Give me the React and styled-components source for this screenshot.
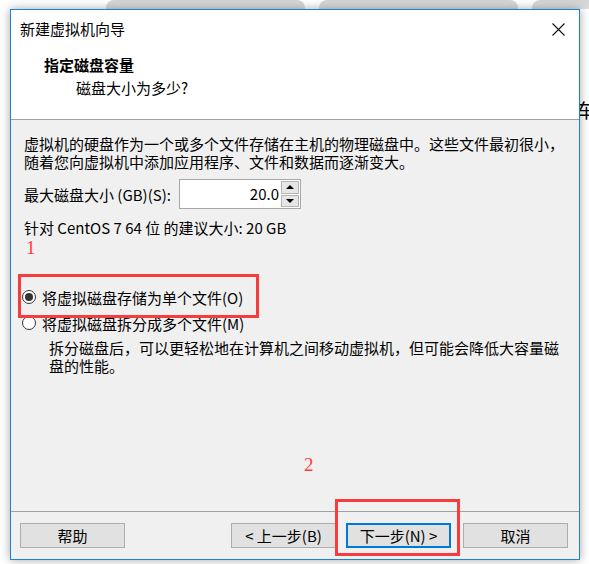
import React from "react";
import styled, { createGlobalStyle } from "styled-components";

const GlobalStyle = createGlobalStyle`
    html, body {
        margin: 0;
        padding: 0;
        background: #ffffff;
    }
    body {
        font-family: "Segoe UI", "Noto Sans CJK SC", sans-serif;
        font-size: 15px;
        color: #000;
    }
`;

function CloseIcon() {
    return (
        <svg width="13" height="13" viewBox="0 0 13 13">
            <path d="M0.5 0.5 L12.5 12.5 M12.5 0.5 L0.5 12.5" stroke="#111" strokeWidth="1.1" fill="none" />
        </svg>
    );
}

function App() {
    return (
        <Page>
            <GlobalStyle />
            <TabStrip>
                <Tab />
                <Tab />
                <Tab />
            </TabStrip>
            <Row>
                <Window>
                    <TitleBar>
                        <Title>新建虚拟机向导</Title>
                        <CloseButton>
                            <CloseIcon />
                        </CloseButton>
                    </TitleBar>
                    <Header>
                        <Heading>指定磁盘容量</Heading>
                        <SubHeading>磁盘大小为多少?</SubHeading>
                    </Header>
                    <Body>
                        <Paragraph>
                            虚拟机的硬盘作为一个或多个文件存储在主机的物理磁盘中。这些文件最初很小，
                            <br />
                            随着您向虚拟机中添加应用程序、文件和数据而逐渐变大。
                        </Paragraph>
                        <SizeRow>
                            <Label>最大磁盘大小 (GB)(S):</Label>
                            <SpinBox>
                                <SpinValue>20.0</SpinValue>
                                <SpinButtons>
                                    <SpinButton>
                                        <Arrow up />
                                    </SpinButton>
                                    <SpinButton>
                                        <Arrow />
                                    </SpinButton>
                                </SpinButtons>
                            </SpinBox>
                        </SizeRow>
                        <Hint>针对 CentOS 7 64 位 的建议大小: 20 GB</Hint>
                        <RadioRow first>
                            <Radio checked />
                            <span>将虚拟磁盘存储为单个文件(O)</span>
                        </RadioRow>
                        <RadioRow>
                            <Radio />
                            <span>将虚拟磁盘拆分成多个文件(M)</span>
                        </RadioRow>
                        <Description>
                            拆分磁盘后，可以更轻松地在计算机之间移动虚拟机，但可能会降低大容量磁
                            <br />
                            盘的性能。
                        </Description>
                    </Body>
                    <Footer>
                        <Button>帮助</Button>
                        <Spacer />
                        <Button>&lt; 上一步(B)</Button>
                        <Button primary>下一步(N) &gt;</Button>
                        <Button last>取消</Button>
                    </Footer>

                    {/* red annotations drawn over the dialog */}
                    <Mark style={{ left: 15, top: 228 }}>1</Mark>
                    <Highlight style={{ left: 7, top: 264, width: 241, height: 44 }} />
                    <Mark style={{ left: 293, top: 445 }}>2</Mark>
                    <Highlight style={{ left: 324, top: 489, width: 125, height: 57 }} />
                </Window>
                <SideStrip>
                    <SideGlyph>车</SideGlyph>
                </SideStrip>
            </Row>
        </Page>
    );
}

const Page = styled.div`
    width: 589px;
    height: 564px;
    overflow: hidden;
    background: #ffffff;
`;

const TabStrip = styled.div`
    display: flex;
    gap: 14px;
    height: 9px;
    padding-left: 106px;
    overflow: hidden;
`;

const Tab = styled.div`
    flex: 0 0 199px;
    height: 14px;
    border-radius: 8px 8px 0 0;
    background: linear-gradient(#d4d4d4, #e2e2e2);
`;

const Row = styled.div`
    display: flex;
`;

const Window = styled.div`
    position: relative;
    margin-left: 10px;
    width: 570px;
    height: 551px;
    box-sizing: border-box;
    border: 1px solid #1883d7;
    background: #f0f0f0;
    box-shadow: 0 0 9px rgba(0, 0, 0, 0.35);
    display: flex;
    flex-direction: column;
    flex-shrink: 0;
`;

const TitleBar = styled.div`
    height: 37px;
    background: #fff;
    display: flex;
    align-items: center;
    justify-content: space-between;
    padding: 0 14px 0 9px;
`;

const Title = styled.div`
    font-size: 15px;
    line-height: 20px;
`;

const CloseButton = styled.div`
    display: flex;
    align-items: center;
    padding-top: 1px;
`;

const Header = styled.div`
    height: 73px;
    box-sizing: border-box;
    background: #fff;
    border-bottom: 1px solid #a0a0a0;
    padding: 8px 0 0 33px;
`;

const Heading = styled.div`
    font-weight: bold;
    font-size: 15px;
    line-height: 20px;
`;

const SubHeading = styled.div`
    margin-top: 3px;
    padding-left: 32px;
    font-size: 15px;
    line-height: 20px;
`;

const Body = styled.div`
    flex: 1;
    padding: 15px 13px 0;
`;

const Paragraph = styled.div`
    line-height: 18px;
    white-space: nowrap;
`;

const SizeRow = styled.div`
    display: flex;
    align-items: center;
    gap: 5px;
    margin-top: 8px;
    height: 30px;
`;

const Label = styled.div`
    line-height: 20px;
    padding-top: 2px;
`;

const SpinBox = styled.div`
    display: flex;
    width: 122px;
    height: 30px;
    box-sizing: border-box;
    border: 1px solid #a8a8a8;
    background: #fff;
    margin-left: auto;
    margin-right: 265px;
`;

const SpinValue = styled.div`
    flex: 1;
    text-align: right;
    padding-right: 2px;
    line-height: 28px;
`;

const SpinButtons = styled.div`
    display: flex;
    flex-direction: column;
    width: 18px;
    padding: 1px 1px 1px 0;
    gap: 1px;
`;

const SpinButton = styled.div`
    flex: 1;
    background: #e6e6e6;
    border: 1px solid #b4b4b4;
    display: flex;
    align-items: center;
    justify-content: center;
`;

const Arrow = styled.div`
    width: 0;
    height: 0;
    border-left: 4px solid transparent;
    border-right: 4px solid transparent;
    ${(props) => (props.up ? "border-bottom: 4px solid #000;" : "border-top: 4px solid #000;")}
`;

const Hint = styled.div`
    margin-top: 10px;
    line-height: 18px;
`;

const RadioRow = styled.div`
    display: flex;
    align-items: center;
    gap: 6px;
    height: 20px;
    margin-top: ${(props) => (props.first ? "50px" : "6px")};
    margin-left: -2px;
`;

const Radio = styled.div`
    width: 14px;
    height: 14px;
    box-sizing: border-box;
    border-radius: 50%;
    border: 1px solid #333;
    background: #fff;
    display: flex;
    align-items: center;
    justify-content: center;

    &::after {
        content: "";
        width: 8px;
        height: 8px;
        border-radius: 50%;
        background: ${(props) => (props.checked ? "#333" : "transparent")};
    }
`;

const Description = styled.div`
    margin-top: 6px;
    padding-left: 25px;
    line-height: 18px;
    white-space: nowrap;
`;

const Footer = styled.div`
    height: 48px;
    box-sizing: border-box;
    border-top: 1px solid #a0a0a0;
    display: flex;
    align-items: flex-start;
    padding: 11px 0 0 9px;
`;

const Spacer = styled.div`
    flex: 1;
`;

const Button = styled.div`
    width: 105px;
    height: 25px;
    box-sizing: border-box;
    background: #e1e1e1;
    border: ${(props) => (props.primary ? "2px solid #0078d7" : "1px solid #adadad")};
    display: flex;
    align-items: center;
    justify-content: center;
    font-size: 15px;
    margin-right: ${(props) => (props.last ? "11px" : props.primary ? "12px" : "10px")};
`;

const Mark = styled.div`
    position: absolute;
    color: #ff3b3b;
    font-family: "Liberation Serif", serif;
    font-size: 19px;
    line-height: 20px;
`;

const Highlight = styled.div`
    position: absolute;
    box-sizing: border-box;
    border: 3px solid #f63c3c;
`;

const SideStrip = styled.div`
    flex: 1;
    overflow: hidden;
    padding-top: 91px;
`;

const SideGlyph = styled.div`
    margin-left: -4px;
    font-size: 19px;
    line-height: 19px;
`;

export default App;
